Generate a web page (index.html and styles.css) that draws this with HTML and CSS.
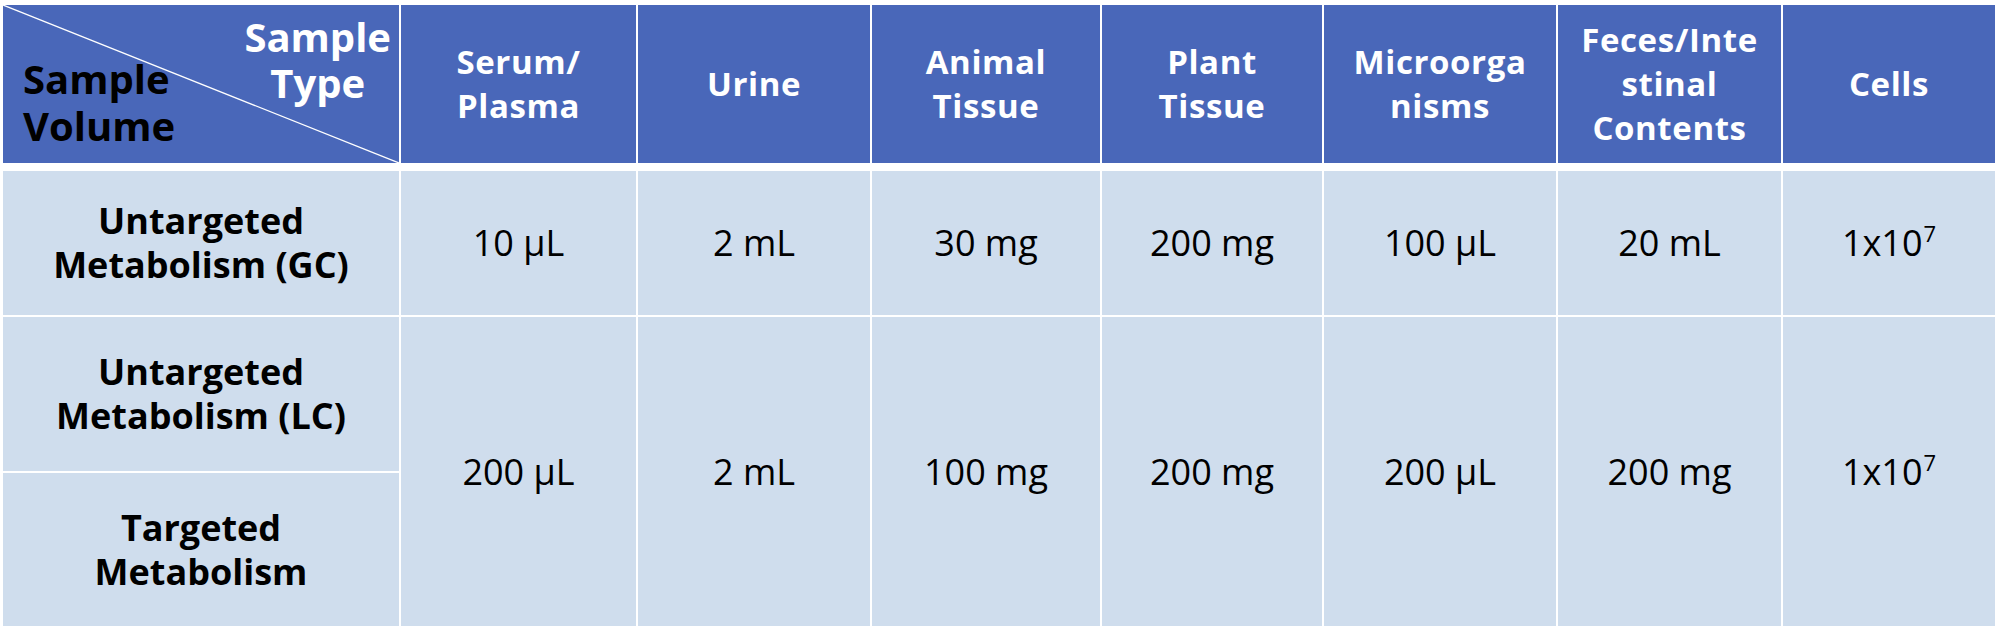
FILE: index.html
```html
<!DOCTYPE html>
<html lang="en">
<head>
<meta charset="utf-8">
<title>Sample Requirements</title>
<link rel="stylesheet" href="styles.css">
</head>
<body>
<div class="wrap">
<table class="spec">
  <colgroup>
    <col class="c1"><col class="c2"><col class="c3"><col class="c4"><col class="c5"><col class="c6"><col class="c7"><col class="c8">
  </colgroup>
  <thead>
    <tr>
      <th class="corner">
        <svg class="diag" viewBox="0 0 100 100" preserveAspectRatio="none"><line x1="0" y1="0" x2="100" y2="100" stroke="#ffffff" stroke-width="1.3" vector-effect="non-scaling-stroke"/></svg>
        <div class="corner-in">
          <span class="ct">Sample<br>Type</span>
          <span class="cv">Sample<br>Volume</span>
        </div>
      </th>
      <th>Serum/<br>Plasma</th>
      <th>Urine</th>
      <th>Animal<br>Tissue</th>
      <th>Plant<br>Tissue</th>
      <th>Microorga<br>nisms</th>
      <th>Feces/Inte<br>stinal<br>Contents</th>
      <th class="last">Cells</th>
    </tr>
  </thead>
  <tbody>
    <tr class="r1">
      <td class="label">Untargeted<br>Metabolism (GC)</td>
      <td>10 µL</td>
      <td>2 mL</td>
      <td>30 mg</td>
      <td>200 mg</td>
      <td>100 µL</td>
      <td>20 mL</td>
      <td class="last">1x10<sup>7</sup></td>
    </tr>
    <tr class="r2">
      <td class="label">Untargeted<br>Metabolism (LC)</td>
      <td rowspan="2">200 µL</td>
      <td rowspan="2">2 mL</td>
      <td rowspan="2">100 mg</td>
      <td rowspan="2">200 mg</td>
      <td rowspan="2">200 µL</td>
      <td rowspan="2">200 mg</td>
      <td rowspan="2" class="last">1x10<sup>7</sup></td>
    </tr>
    <tr class="r3">
      <td class="label">Targeted<br>Metabolism</td>
    </tr>
  </tbody>
</table>
</div>
</body>
</html>
```
FILE: styles.css
```css
html, body {
  margin: 0;
  padding: 0;
  background: #ffffff;
}

.wrap {
  padding: 5px 4px 0 3px;
}

.spec {
  width: 1992px;
  table-layout: fixed;
  border-collapse: separate;
  border-spacing: 0;
  font-family: "Open Sans", "Noto Sans", "Liberation Sans", sans-serif;
}

.c1 { width: 398px; }
.c2 { width: 237px; }
.c3 { width: 234px; }
.c4 { width: 230px; }
.c5 { width: 222px; }
.c6 { width: 234px; }
.c7 { width: 225px; }
.c8 { width: 212px; }

.spec th,
.spec td {
  box-sizing: border-box;
  padding: 0;
  text-align: center;
  vertical-align: middle;
  border-right: 2px solid #ffffff;
  border-bottom: 2px solid #ffffff;
}

.spec th.last,
.spec td.last {
  border-right: 0;
}

.spec th {
  height: 166px;
  background: #4967b9;
  color: #ffffff;
  font-size: 33px;
  font-weight: 700;
  line-height: 44px;
  letter-spacing: 0.6px;
  border-bottom: 8px solid #ffffff;
}

.spec td {
  background: #cfdded;
  color: #000000;
  font-size: 36px;
  font-weight: 400;
  line-height: 44px;
}

.spec td.label {
  font-weight: 700;
}

.r1 td { height: 146px; }
.r2 td.label { height: 156px; }
.r3 td { height: 155px; }

.spec sup {
  font-size: 22px;
  line-height: 0;
  vertical-align: 14px;
  margin-left: 1px;
}

.corner {
  position: relative;
}

.diag {
  position: absolute;
  left: 0;
  top: 0;
  width: 100%;
  height: 100%;
  display: block;
}

.corner-in {
  position: relative;
  height: 158px;
  display: flex;
  flex-direction: column;
  justify-content: flex-start;
  padding: 0 8px 0 20px;
  box-sizing: border-box;
  font-size: 40px;
  line-height: 46px;
  letter-spacing: 0;
}

.ct {
  align-self: flex-end;
  color: #ffffff;
  text-align: center;
  margin-top: 9px;
}

.cv {
  align-self: flex-start;
  color: #000000;
  text-align: left;
  margin-top: -51px;
  line-height: 47px;
}
```
